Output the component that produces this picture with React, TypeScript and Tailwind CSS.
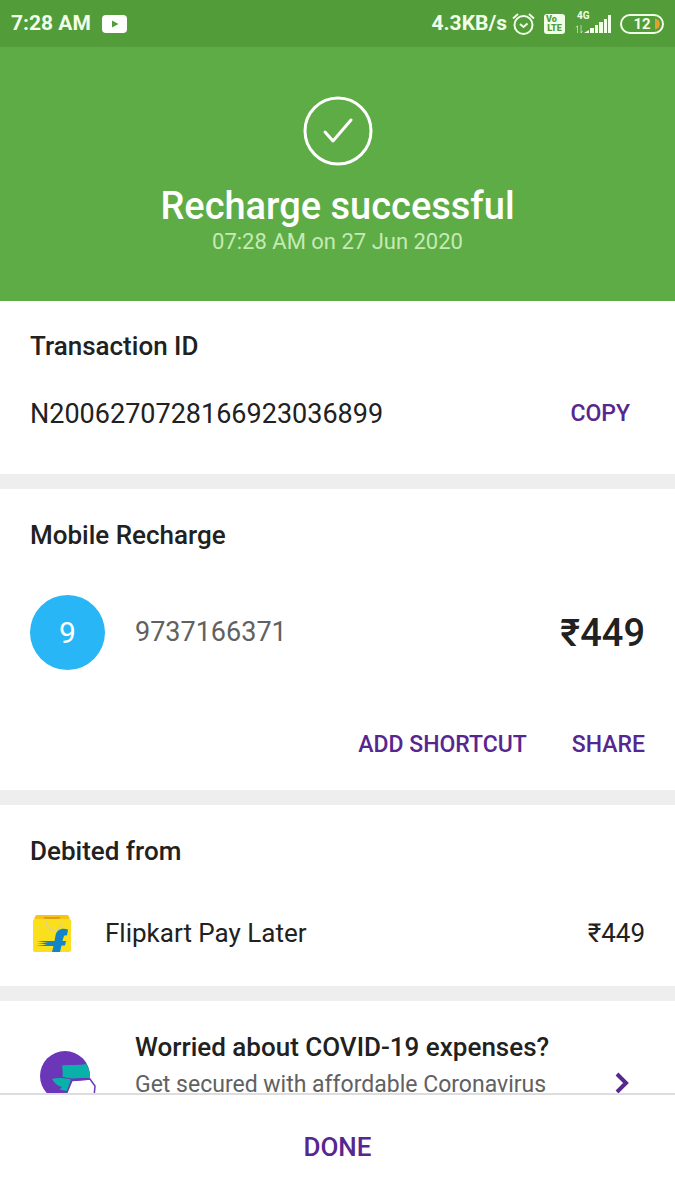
import type { ReactNode } from 'react';

const StatusBar = () => (
  <div className="flex h-[47px] shrink-0 items-center justify-between bg-[#529c39] px-[11px] pt-px text-[21px] font-bold text-[#f1ffe8]">
    <div className="flex items-center gap-[11px]">
      <span>7:28 AM</span>
      <svg width="25" height="18" viewBox="0 0 25 18" aria-hidden="true">
        <rect width="25" height="18" rx="4" fill="#fff" />
        <path d="M10 5.5v7l6.5-3.5z" fill="#529c39" />
      </svg>
    </div>

    <div className="flex items-center">
      <span>4.3KB/s</span>
      {/* Alarm */}
      <svg className="ml-[5px]" width="23" height="24" viewBox="0 0 23 24" fill="none" stroke="currentColor" strokeWidth="2" aria-hidden="true">
        <circle cx="11.5" cy="13" r="9" />
        <path d="M8 12l3.500 3 4-3.500M1 6.500l5-4.500M22 6.500l-5-4.500" />
      </svg>
      {/* VoLTE */}
      <span className="ml-[9px] flex h-5 w-[21px] flex-col items-center justify-center rounded-[3px] bg-[#f1ffe8] text-[9px] leading-[9px] font-black text-[#529c39]">
        <span className="self-start pl-[2px]">Vo</span>
        <span>LTE</span>
      </span>
      {/* Signal */}
      <svg className="ml-[10px]" width="37" height="26" viewBox="0 0 37 26" fill="currentColor" aria-hidden="true">
        <text x="2" y="8" fontSize="10" fontWeight="700">4G</text>
        <path d="M2.500 15v7M1 16.500l1.500-2M6 14v8M6 22l1.500-2" stroke="currentColor" strokeWidth="1" fill="none" opacity="0.6" />
        <path d="M9 22l5-3v3zM15 17h4v5h-4zM20 14h3v8h-3zM24 11h4v11h-4zM29 8h3v14h-3zM33 4h3v18h-3z" />
      </svg>
      {/* Battery */}
      <svg className="ml-[8px]" width="44" height="20" viewBox="0 0 44 20" aria-hidden="true">
        <rect x="1" y="1" width="42" height="18" rx="9" fill="none" stroke="currentColor" strokeWidth="2" />
        <path d="M35 4.500c6.500 1 6.500 10 0 11z" fill="#e2a02c" />
        <text x="22" y="15" fontSize="15" fontWeight="700" fill="currentColor" textAnchor="middle">12</text>
      </svg>
    </div>
  </div>
);

const Section = ({ title, className, children }: { title: string; className: string; children: ReactNode }) => (
  <section className={`px-[30px] ${className}`}>
    <h2 className="text-[26px] leading-8 font-medium">{title}</h2>
    {children}
  </section>
);

const Divider = () => <div className="h-[15px] shrink-0 bg-[#eeeeee]" />;

const FlipkartIcon = () => (
  <svg width="40" height="40" viewBox="0 0 40 40" aria-hidden="true">
    <path d="M5 2h30q2 0 3 5H2q1-5 3-5z" fill="#f6c414" />
    <path d="M11 4h18l-2 2H13z" fill="#dd9d18" />
    <rect x="1" y="6" width="38" height="33" rx="2" fill="#fae01c" />
    <path d="M14 9c2 11 14 11 16 0" fill="none" stroke="#e5cf8a" strokeWidth="1.500" />
    <path d="M36 16.500c-7-2-11.500 1-12.500 6l-1 5.500H5l11 2H5l10 1.500-11 1.500h17.500L20 39h8l1.500-6.500h3.500l1-4.500h-3.500l1-3.500c.5-2 1.500-2.500 3.500-2z" fill="#1285c8" />
  </svg>
);

const MaskIcon = () => (
  <svg width="58" height="58" viewBox="0 0 58 58" aria-hidden="true">
    <circle cx="25" cy="25" r="25" fill="#6b36b8" />
    <path d="M22 14.500c8-1 17 0 24.500-1.500 2 4 4 9 3.500 14-6 0-12 0-18 .5-4-.5-7-1-9.500-2 .5-4 0-7-.5-11z" fill="#08b2a8" />
    <path d="M12 28c6-1.500 13-1 19 .5l-4.500 13.500-7.500-3 3-3c-4-1-8-4-10-8z" fill="#08b2a8" />
    <path d="M32 29.500q9-.5 18-1.500l5 7-1 11-9 10H31l-6-10z" fill="#fff" stroke="#6b36b8" strokeWidth="1.500" />
    <path d="M19 39l8 2" stroke="#6b36b8" strokeWidth="1.500" />
  </svg>
);

export default function App() {
  return (
    <div className="flex h-screen flex-col bg-white font-[Roboto,sans-serif] text-[#212121]">
      <StatusBar />

      <main className="min-h-0 flex-1 overflow-hidden">
        <header className="flex flex-col items-center bg-[#5eac46] pt-[49px] pb-[45px] text-white">
          <svg width="70" height="70" viewBox="0 0 70 70" fill="none" stroke="currentColor" strokeWidth="3" aria-hidden="true">
            <circle cx="35" cy="35" r="33" />
            <path d="M22 36l8 9 18-21" strokeLinecap="round" strokeLinejoin="round" />
          </svg>
          <h1 className="mt-[18px] text-[38px] leading-[44px] font-medium">Recharge successful</h1>
          <p className="text-[22px] leading-7 text-[#c5eab5]">07:28 AM on 27 Jun 2020</p>
        </header>

        <Section title="Transaction ID" className="pt-[29px] pb-11">
          <div className="mt-9 flex items-center justify-between pr-[15px] leading-8">
            <span className="text-[27px]">N2006270728166923036899</span>
            <button className="text-[23px] font-medium text-[#56278f]">COPY</button>
          </div>
        </Section>
        <Divider />

        <Section title="Mobile Recharge" className="pt-[30px] pb-[29px]">
          <div className="mt-11 flex items-center">
            <span className="flex size-[75px] items-center justify-center rounded-full bg-[#29b6f6] text-[30px] text-white">9</span>
            <span className="ml-[30px] text-[27px] text-[#616161]">9737166371</span>
            <span className="ml-auto text-[38px] leading-[44px] font-medium">₹449</span>
          </div>
          <div className="mt-[59px] flex justify-end gap-[45px] text-[23px] leading-8 font-medium text-[#56278f]">
            <button>ADD SHORTCUT</button>
            <button>SHARE</button>
          </div>
        </Section>
        <Divider />

        <Section title="Debited from" className="pt-[30px] pb-[33px]">
          <div className="mt-[46px] flex h-10 items-center pl-[2px] text-[26px]">
            <FlipkartIcon />
            <span className="ml-[33px]">Flipkart Pay Later</span>
            <span className="ml-auto">₹449</span>
          </div>
        </Section>
        <Divider />

        <a href="#covid-cover" className="flex items-start px-[30px] pt-[30px]">
          <span className="mt-5 ml-[10px]">
            <MaskIcon />
          </span>
          <span className="ml-[37px] flex flex-1 flex-col">
            <span className="text-[26px] leading-8 font-medium">Worried about COVID-19 expenses?</span>
            <span className="mt-[6px] text-[23px] leading-8 text-[#616161]">Get secured with affordable Coronavirus</span>
          </span>
          <svg className="mt-10 mr-[14px]" width="16" height="24" viewBox="0 0 16 24" fill="none" stroke="#56278f" strokeWidth="4" aria-hidden="true">
            <path d="M2 3l9 9-9 9" />
          </svg>
        </a>
      </main>

      <footer className="shrink-0 border-t-2 border-[#dddddd] bg-white">
        <button className="h-[105px] w-full text-[26px] font-medium text-[#56278f]">DONE</button>
      </footer>
    </div>
  );
}
